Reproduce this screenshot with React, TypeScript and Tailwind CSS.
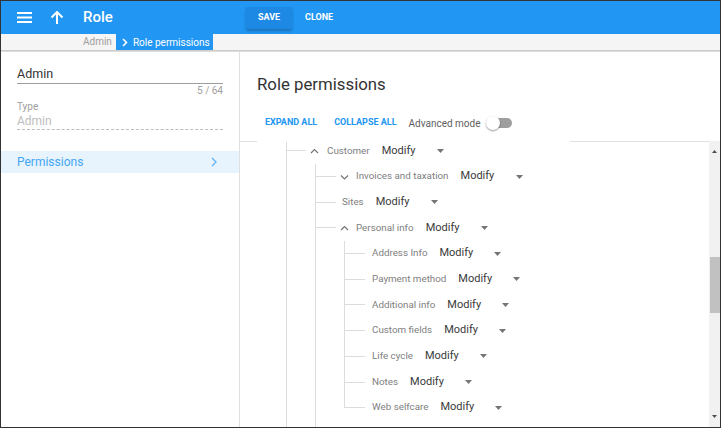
import React from 'react';

const LINE = 'border-[#dcdcdc]';

function Chevron({ up }: { up?: boolean }) {
  return (
    <svg width="11" height="8" viewBox="0 0 11 8" className="shrink-0 ml-[3px]">
      <polyline
        points={up ? '2,6 5.5,2.5 9,6' : '2,2.5 5.5,6 9,2.5'}
        fill="none"
        stroke="#757575"
        strokeWidth="1.2"
      />
    </svg>
  );
}

function Select() {
  return (
    <div className="flex items-center w-[64px] ml-[12px] shrink-0">
      <span className="flex-1 text-[11px] text-[#3a3a3a]">Modify</span>
      <svg width="7" height="4" viewBox="0 0 7 4" className="mr-[2px]">
        <polygon points="0,0 7,0 3.5,4" fill="#757575" />
      </svg>
    </div>
  );
}

function Label({ children, ml }: { children: React.ReactNode; ml: string }) {
  return <span className={`text-[9.8px] text-[#808080] whitespace-nowrap ${ml}`}>{children}</span>;
}

function Leaf({ name, last }: { name: string; last?: boolean }) {
  return (
    <div className="h-[25.7px] flex items-center">
      <div className="self-stretch w-[21px] flex flex-col shrink-0">
        <div className={`flex-1 border-l border-b ${LINE}`} />
        <div className={`flex-1 ${last ? '' : `border-l ${LINE}`}`} />
      </div>
      <Label ml="ml-[7px]">{name}</Label>
      <Select />
    </div>
  );
}

const personal = [
  'Address Info',
  'Payment method',
  'Additional info',
  'Custom fields',
  'Life cycle',
  'Notes',
  'Web selfcare',
];

export default function App() {
  return (
    <div
      className="w-[721px] h-[428px] border border-[#333] bg-white flex flex-col overflow-hidden"
      style={{ fontFamily: 'Roboto, "Liberation Sans", sans-serif' }}
    >
      {/* Header */}
      <div className="h-[33px] bg-[#2196f3] flex items-center shrink-0">
        <div className="w-[82px] flex items-center">
          <svg width="15" height="11" viewBox="0 0 15 11" className="ml-[16px]">
            <rect x="0" y="0" width="15" height="2" fill="#fff" />
            <rect x="0" y="4.5" width="15" height="2" fill="#fff" />
            <rect x="0" y="9" width="15" height="2" fill="#fff" />
          </svg>
          <svg width="14" height="14" viewBox="0 0 14 14" className="ml-[18px]">
            <path d="M1.5 6.5 7 1 12.5 6.5M7 1.5V13" fill="none" stroke="#fff" strokeWidth="2" />
          </svg>
        </div>
        <div className="w-[163px] text-white text-[15px] font-medium">Role</div>
        <button className="w-[46px] h-[22px] bg-[#1e88e5] rounded-[2px] shadow-[0_2px_3px_rgba(0,0,0,0.25)] text-white text-[9px] font-bold">
          SAVE
        </button>
        <button className="ml-[13px] text-white text-[9px] font-bold">CLONE</button>
      </div>

      {/* Breadcrumb */}
      <div className="h-[16px] bg-[#f5f5f5] flex items-stretch shrink-0">
        <span className="ml-[82px] text-[10px] text-[#9e9e9e] leading-[16px]">Admin</span>
        <div className="ml-[4px] bg-[#2196f3] flex items-center pl-[6px] pr-[3px] text-white">
          <svg width="6" height="9" viewBox="0 0 6 9">
            <polyline points="1,1 4.5,4.5 1,8" fill="none" stroke="#fff" strokeWidth="1.6" />
          </svg>
          <span className="ml-[5px] text-[10px]">Role permissions</span>
        </div>
      </div>
      <div className="h-[2px] bg-gradient-to-b from-[#c4c4c4] to-[#e6e6e6] shrink-0" />

      {/* Body */}
      <div className="flex-1 flex min-h-0">
        {/* Left panel */}
        <div className="w-[239px] border-r border-[#e0e0e0] shrink-0">
          <div className="mx-[16px]">
            <div className="pt-[14px] pb-[1px] border-b border-[#9e9e9e] text-[12.5px] leading-[16px] text-[#333]">
              Admin
            </div>
            <div className="mt-[1px] text-right text-[10px] leading-[12px] text-[#9e9e9e]">5 / 64</div>
            <div className="mt-[4px] text-[10px] leading-[12px] text-[#9e9e9e]">Type</div>
            <div className="mt-[1px] pb-[1px] border-b border-dashed border-[#bdbdbd] text-[12px] leading-[14px] text-[#bdbdbd]">
              Admin
            </div>
          </div>
          <div className="mt-[21px] h-[22px] bg-[#e8f4fd] flex items-center justify-between pl-[16px] pr-[22px]">
            <span className="text-[12px] text-[#42a5f5]">Permissions</span>
            <svg width="6" height="10" viewBox="0 0 6 10">
              <polyline points="1,1 5,5 1,9" fill="none" stroke="#64b5f6" strokeWidth="1.4" />
            </svg>
          </div>
        </div>

        {/* Right panel */}
        <div className="flex-1 flex flex-col min-w-0">
          <div className="pt-[21px] pl-[17px] text-[16.8px] leading-[22px] text-[#333]">Role permissions</div>
          <div className="mt-[18px] h-[20px] flex items-center">
            <span className="ml-[25px] text-[9px] font-bold text-[#2196f3]">EXPAND ALL</span>
            <span className="ml-[17px] text-[9px] font-bold text-[#2196f3]">COLLAPSE ALL</span>
            <span className="ml-[12px] text-[10px] text-[#616161]">Advanced mode</span>
            <div className="ml-[6px] w-[26px] h-[14px] flex items-center">
              <div className="w-[14px] h-[14px] rounded-full bg-white shadow-[0_1px_2px_rgba(0,0,0,0.4)] shrink-0 z-10" />
              <div className="-ml-[9px] w-[21px] h-[10px] rounded-full bg-[#9e9e9e]" />
            </div>
          </div>

          <div className="mt-[8px] flex-1 flex min-h-0">
            <div className="flex-1 flex flex-col min-w-0 overflow-hidden">
              <div className="h-px flex shrink-0">
                <div className="w-[17px] bg-[#e0e0e0]" />
                <div className="w-[313px]" />
                <div className="flex-1 bg-[#e0e0e0]" />
              </div>
              <div className={`flex-1 ml-[46px] border-l ${LINE} min-h-0`}>
                <div className="-mt-[4px]">
                  {/* Customer */}
                  <div className="h-[25.7px] flex items-center">
                    <div className="w-[19px] h-px bg-[#dcdcdc] shrink-0" />
                    <Chevron up />
                    <Label ml="ml-[7px]">Customer</Label>
                    <Select />
                  </div>
                  <div className={`ml-[28px] border-l ${LINE}`}>
                    <div className="h-[25.7px] flex items-center">
                      <div className="w-[20px] h-px bg-[#dcdcdc] shrink-0" />
                      <Chevron />
                      <Label ml="ml-[6px]">Invoices and taxation</Label>
                      <Select />
                    </div>
                    <div className="h-[25.7px] flex items-center">
                      <div className="w-[20px] h-px bg-[#dcdcdc] shrink-0" />
                      <Label ml="ml-[6px]">Sites</Label>
                      <Select />
                    </div>
                    <div className="h-[25.7px] flex items-center">
                      <div className="w-[20px] h-px bg-[#dcdcdc] shrink-0" />
                      <Chevron up />
                      <Label ml="ml-[6px]">Personal info</Label>
                      <Select />
                    </div>
                    <div className="ml-[28px]">
                      {personal.map((p, i) => (
                        <Leaf key={p} name={p} last={i === personal.length - 1} />
                      ))}
                    </div>
                    <div className="h-[40px]" />
                  </div>
                </div>
              </div>
            </div>

            {/* Scrollbar */}
            <div className="w-[11px] bg-[#f1f1f1] flex flex-col shrink-0">
              <div className="h-[12px] flex items-end justify-center">
                <svg width="5" height="3" viewBox="0 0 5 3">
                  <polygon points="0,3 5,3 2.5,0" fill="#505050" />
                </svg>
              </div>
              <div className="h-[104px]" />
              <div className="h-[56px] ml-px bg-[#c1c1c1]" />
              <div className="flex-1" />
              <div className="h-[12px] flex items-start justify-center">
                <svg width="5" height="3" viewBox="0 0 5 3">
                  <polygon points="0,0 5,0 2.5,3" fill="#505050" />
                </svg>
              </div>
            </div>
          </div>
        </div>
      </div>
    </div>
  );
}
